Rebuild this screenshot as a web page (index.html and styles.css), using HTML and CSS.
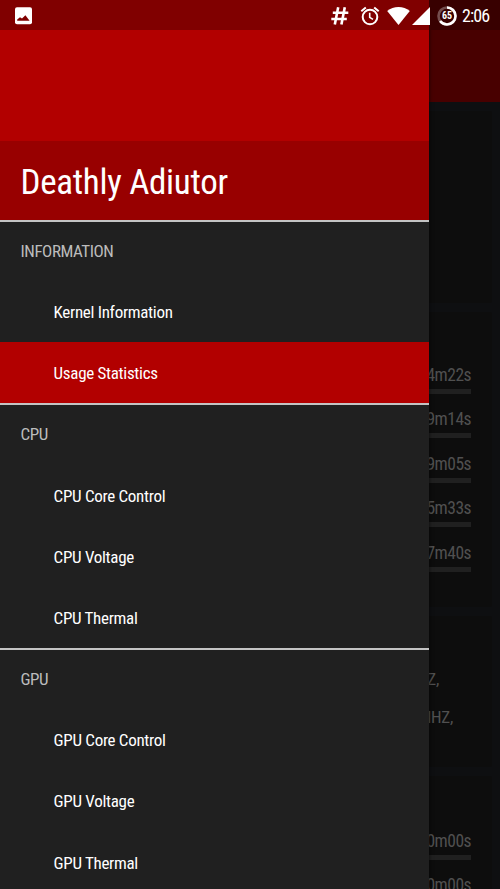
FILE: index.html
```html
<!DOCTYPE html>
<html lang="en">
<head>
    <meta charset="UTF-8">
    <meta name="viewport" content="width=device-width, initial-scale=1.0">
    <title>Deathly Adiutor</title>
    <link rel="stylesheet" href="styles.css">
</head>
<body>

<div class="screen">
    <main class="page">
        <div class="toolbar"></div>
        <section class="card card-chart"></section>
        <section class="card card-times">
            <div class="time-row">4m22s<div class="bar"></div></div>
            <div class="time-row">9m14s<div class="bar"></div></div>
            <div class="time-row">9m05s<div class="bar"></div></div>
            <div class="time-row">5m33s<div class="bar"></div></div>
            <div class="time-row">7m40s<div class="bar"></div></div>
        </section>
        <section class="card card-unused">
            <p class="freq">Z,</p>
            <p class="freq freq-long">MHZ,</p>
        </section>
        <section class="card card-times card-last">
            <div class="time-row">0m00s<div class="bar"></div></div>
            <div class="time-row">0m00s<div class="bar"></div></div>
        </section>
    </main>

    <nav class="drawer">
        <div class="drawer-header">
            <h1 class="drawer-title">Deathly Adiutor</h1>
        </div>
        <ul class="group">
            <li class="heading">INFORMATION</li>
            <li class="item">Kernel Information</li>
            <li class="item active">Usage Statistics</li>
        </ul>
        <ul class="group">
            <li class="heading">CPU</li>
            <li class="item">CPU Core Control</li>
            <li class="item">CPU Voltage</li>
            <li class="item">CPU Thermal</li>
        </ul>
        <ul class="group">
            <li class="heading">GPU</li>
            <li class="item">GPU Core Control</li>
            <li class="item">GPU Voltage</li>
            <li class="item">GPU Thermal</li>
        </ul>
    </nav>

    <header class="status-bar">
        <svg class="icon-image" width="18" height="18" viewBox="0 0 18 18">
            <rect x="0" y="0.3" width="17" height="17" rx="2" fill="#fff"/>
            <path d="M2.2 13.8 V12.6 L5 10.2 L7 11.6 L10.4 8.2 L14.6 13.8 Z" fill="#800000"/>
        </svg>
        <div class="status-icons">
            <svg width="18" height="18" viewBox="0 0 18 18" fill="none" stroke="#fff" stroke-width="2.6">
                <path d="M7.2 0.3 L3.8 17.5 M13.8 0.3 L10.4 17.5 M1.8 5.8 H17.3 M0.3 12 H15.8"/>
            </svg>
            <svg class="icon-alarm" width="20" height="20" viewBox="0 0 20 20" fill="none" stroke="#fff" stroke-width="2">
                <circle cx="10" cy="11" r="7.3"/>
                <path d="M1.3 5.2 L5.8 1.4 M18.7 5.2 L14.2 1.4"/>
                <path d="M9.7 6.7 V11.4 L13 13.4" stroke-width="1.6"/>
            </svg>
            <svg class="icon-wifi" width="23" height="18" viewBox="0 0 23 18">
                <path d="M0.2 4 C6.5 -1.2 16.5 -1.2 22.8 4 L11.5 18 Z" fill="#fff"/>
            </svg>
            <svg class="icon-signal" width="18" height="18" viewBox="0 0 18 18">
                <path d="M0 18 L18 0 V18 Z" fill="#fff"/>
            </svg>
            <svg class="icon-battery" width="20" height="20" viewBox="0 0 20 20">
                <circle cx="10" cy="10" r="8.5" fill="none" stroke="#fff" stroke-opacity="0.3" stroke-width="2.6"/>
                <circle cx="10" cy="10" r="8.5" fill="none" stroke="#fff" stroke-width="2.6" pathLength="100" stroke-dasharray="65 35" transform="rotate(-90 10 10)"/>
                <text class="battery-level" x="10" y="13.3" text-anchor="middle">65</text>
            </svg>
            <span class="clock">2:06</span>
        </div>
    </header>
</div>

</body>
</html>
```
FILE: styles.css
```css
* {
    box-sizing: border-box;
}
body {
    margin: 0;
    font-family: "Roboto Condensed", Roboto, sans-serif;
    font-stretch: condensed;
    font-size: 17px;
    letter-spacing: -0.3px;
    background-color: #0e0f11;
}
.screen {
    position: relative;
    width: 500px;
    height: 889px;
    overflow: hidden;
}

/* dimmed page behind the drawer */
.page {
    color: #505050;
    text-align: right;
}
.toolbar {
    height: 102px;
    background-color: #480000;
}
.card {
    margin: 0 8px 9px;
    padding-right: 21px;
    background-color: #0d0d0d;
    border-radius: 2px;
}
.card-chart {
    height: 192px;
    margin-top: 9px;
}
.card-times {
    height: 295px;
    padding-top: 44px;
}
.time-row {
    height: 44.4px;
    line-height: 20px;
    padding-top: 9px;
    font-size: 17.5px;
    letter-spacing: -0.5px;
}
.bar {
    height: 5px;
    margin-top: 4px;
    background-color: #202020;
}
.card-unused {
    height: 151px;
    padding-top: 53px;
}
.card-last {
    height: 113px;
    margin-bottom: 0;
    padding-top: 46px;
}
.freq {
    margin: 0 32px 18px 0;
    line-height: 20px;
}
.freq-long {
    margin-right: 18px;
}

.drawer {
    position: absolute;
    top: 0;
    left: 0;
    width: 429px;
    height: 889px;
    overflow: hidden;
    background-color: #202020;
    box-shadow: 0 0 4px rgba(0, 0, 0, 0.7);
}
.drawer-header {
    display: flex;
    align-items: flex-end;
    height: 220px;
    background-color: #b20000;
}
.drawer-title {
    width: 100%;
    height: 79px;
    margin: 0;
    padding-left: 20.5px;
    line-height: 84px;
    font-size: 35px;
    font-weight: 400;
    color: #fff;
    background-color: #980000;
}
.group {
    margin: 0;
    padding: 0;
    list-style: none;
    border-top: 2px solid #c4c4c4;
}
.heading,
.item {
    height: 61.1px;
    line-height: 62.6px;
}
.heading {
    height: 59.3px;
    padding-left: 20.5px;
    line-height: 59px;
    letter-spacing: -0.45px;
    color: #bcbcbc;
}
.item {
    padding-left: 53.6px;
    color: #fff;
}
.active {
    background-color: #b20000;
}

.status-bar {
    position: absolute;
    top: 0;
    left: 0;
    display: flex;
    justify-content: space-between;
    align-items: center;
    width: 500px;
    height: 30px;
    padding: 1px 11px 0 15px;
    background: linear-gradient(to right, #800000 429px, #380000 429px);
}
.status-icons {
    display: flex;
    align-items: center;
    color: #fff;
}
.icon-alarm {
    margin-left: 11px;
}
.icon-wifi {
    margin-left: 7px;
}
.icon-signal {
    margin-left: 2px;
}
.icon-battery {
    margin-left: 7px;
}
.battery-level {
    font-size: 10px;
    font-weight: 700;
    letter-spacing: 0;
    fill: #fff;
}
.clock {
    width: 27px;
    margin-left: 5px;
    font-size: 18px;
    letter-spacing: -0.9px;
}
```
